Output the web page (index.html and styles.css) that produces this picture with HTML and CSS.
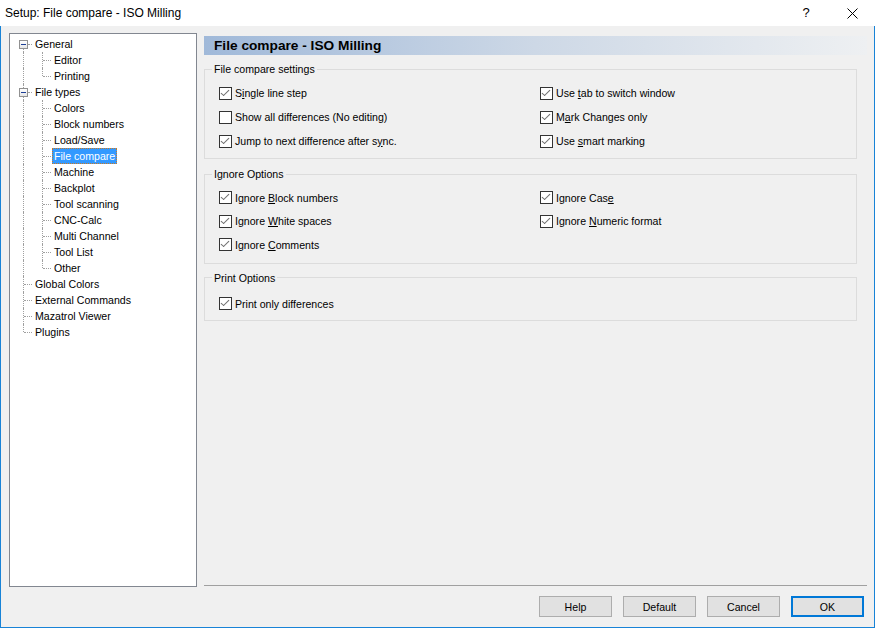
FILE: index.html
```html
<!DOCTYPE html>
<html>
<head>
<meta charset="utf-8">
<title>Setup: File compare - ISO Milling</title>
<link rel="stylesheet" href="styles.css">
</head>
<body>
<div class="window">
  <div class="titlebar">
    <span class="title">Setup: File compare - ISO Milling</span>
    <span class="tbtn help">?</span>
    <span class="tbtn close"><svg width="11" height="11" viewBox="0 0 11 11"><path d="M0.5 0.5 L10.5 10.5 M10.5 0.5 L0.5 10.5" stroke="#000" stroke-width="1" fill="none"/></svg></span>
  </div>
  <div class="body">
    <div class="tree">
      <div class="row"><span class="g exp first"><span class="box"><i></i></span></span><span class="lbl">General</span></div>
      <div class="row"><span class="g v"></span><span class="g tee"></span><span class="lbl">Editor</span></div>
      <div class="row"><span class="g v"></span><span class="g ell"></span><span class="lbl">Printing</span></div>
      <div class="row"><span class="g exp"><span class="box"><i></i></span></span><span class="lbl">File types</span></div>
      <div class="row"><span class="g v"></span><span class="g tee"></span><span class="lbl">Colors</span></div>
      <div class="row"><span class="g v"></span><span class="g tee"></span><span class="lbl">Block numbers</span></div>
      <div class="row"><span class="g v"></span><span class="g tee"></span><span class="lbl">Load/Save</span></div>
      <div class="row"><span class="g v"></span><span class="g tee"></span><span class="lbl sel">File compare</span></div>
      <div class="row"><span class="g v"></span><span class="g tee"></span><span class="lbl">Machine</span></div>
      <div class="row"><span class="g v"></span><span class="g tee"></span><span class="lbl">Backplot</span></div>
      <div class="row"><span class="g v"></span><span class="g tee"></span><span class="lbl">Tool scanning</span></div>
      <div class="row"><span class="g v"></span><span class="g tee"></span><span class="lbl">CNC-Calc</span></div>
      <div class="row"><span class="g v"></span><span class="g tee"></span><span class="lbl">Multi Channel</span></div>
      <div class="row"><span class="g v"></span><span class="g tee"></span><span class="lbl">Tool List</span></div>
      <div class="row"><span class="g v"></span><span class="g ell"></span><span class="lbl">Other</span></div>
      <div class="row"><span class="g tee"></span><span class="lbl">Global Colors</span></div>
      <div class="row"><span class="g tee"></span><span class="lbl">External Commands</span></div>
      <div class="row"><span class="g tee"></span><span class="lbl">Mazatrol Viewer</span></div>
      <div class="row"><span class="g ell"></span><span class="lbl">Plugins</span></div>
    </div>

    <div class="panel">
      <div class="header">File compare - ISO Milling</div>

      <fieldset class="group g1">
        <legend>File compare settings</legend>
        <div class="opts">
          <label class="opt"><span class="cb on"></span><span class="t">S<u>i</u>ngle line step</span></label>
          <label class="opt"><span class="cb on"></span><span class="t">Use <u>t</u>ab to switch window</span></label>
          <label class="opt"><span class="cb"></span><span class="t">Show all differences (No editing)</span></label>
          <label class="opt"><span class="cb on"></span><span class="t">M<u>a</u>rk Changes only</span></label>
          <label class="opt"><span class="cb on"></span><span class="t">Jump to next difference after s<u>y</u>nc.</span></label>
          <label class="opt"><span class="cb on"></span><span class="t">Use <u>s</u>mart marking</span></label>
        </div>
      </fieldset>

      <fieldset class="group g2">
        <legend>Ignore Options</legend>
        <div class="opts">
          <label class="opt"><span class="cb on"></span><span class="t">Ignore <u>B</u>lock numbers</span></label>
          <label class="opt"><span class="cb on"></span><span class="t">Ignore Cas<u>e</u></span></label>
          <label class="opt"><span class="cb on"></span><span class="t">Ignore <u>W</u>hite spaces</span></label>
          <label class="opt"><span class="cb on"></span><span class="t">Ignore <u>N</u>umeric format</span></label>
          <label class="opt"><span class="cb on"></span><span class="t">Ignore <u>C</u>omments</span></label>
        </div>
      </fieldset>

      <fieldset class="group g3">
        <legend>Print Options</legend>
        <div class="opts">
          <label class="opt"><span class="cb on"></span><span class="t">Print only differences</span></label>
        </div>
      </fieldset>

      <div class="sep"></div>
    </div>

    <div class="buttons">
      <button class="btn">Help</button>
      <button class="btn">Default</button>
      <button class="btn">Cancel</button>
      <button class="btn default">OK</button>
    </div>
  </div>
</div>
</body>
</html>
```

FILE: styles.css
```css
* { box-sizing: border-box; }

html, body {
  margin: 0;
  padding: 0;
  background: #f0f0f0;
}

body {
  font-family: "Liberation Sans", Arial, sans-serif;
  font-size: 10.6px;
  color: #000;
}

.window {
  width: 875px;
  height: 628px;
  display: flex;
  flex-direction: column;
  overflow: hidden;
}

/* Title bar */
.titlebar {
  height: 26px;
  flex: none;
  background: #fff;
  display: flex;
  align-items: center;
}

.title {
  flex: 1;
  padding-left: 5px;
  font-size: 12px;
  padding-bottom: 1px;
}

.tbtn {
  width: 46px;
  height: 26px;
  display: flex;
  align-items: center;
  justify-content: center;
  font-size: 13px;
}

.tbtn.help { padding-bottom: 1px; }

/* Body */
.body {
  flex: 1;
  background: #f0f0f0;
  border: 1px solid #1883d7;
  border-top: none;
  display: grid;
  grid-template-columns: 188px 1fr;
  grid-template-rows: 554px auto;
  column-gap: 7px;
  padding: 7px 7px 0 8px;
}

/* Tree */
.tree {
  background: #fff;
  border: 1px solid #828790;
  padding: 2px 0 0 4px;
}

.row {
  display: flex;
  height: 16px;
  align-items: stretch;
}

.g {
  position: relative;
  width: 19px;
  height: 16px;
  flex: none;
}

.v::before,
.tee::before,
.ell::before,
.exp::before {
  content: "";
  position: absolute;
  left: 9px;
  top: 0;
  bottom: 0;
  border-left: 1px dotted #a0a0a0;
}

.ell::before { bottom: 8px; }
.exp.first::before { top: 13px; }

.tee::after,
.ell::after,
.exp::after {
  content: "";
  position: absolute;
  left: 10px;
  right: 1px;
  top: 8px;
  border-top: 1px dotted #a0a0a0;
}

.exp::after { left: 14px; }

.box {
  position: absolute;
  left: 5px;
  top: 4px;
  width: 9px;
  height: 9px;
  border: 1px solid #919191;
  background: linear-gradient(#ffffff, #e6e6e6);
  display: flex;
  align-items: center;
  justify-content: center;
  z-index: 1;
}

.box i {
  display: block;
  width: 5px;
  height: 1px;
  background: #1d3f96;
}

.lbl {
  height: 16px;
  line-height: 14px;
  border: 1px dotted transparent;
  padding: 0 1px;
  white-space: nowrap;
}

.lbl.sel {
  background: #3399ff;
  color: #fff;
  border-color: #cc7a22;
}

/* Right panel */
.panel {
  display: flex;
  flex-direction: column;
  min-width: 0;
}

.header {
  margin-top: 3px;
  height: 19px;
  line-height: 19px;
  padding-left: 10px;
  font-size: 13.7px;
  font-weight: bold;
  background: linear-gradient(to right, #a0b9d9, #cdd8e6 50%, #eef0f2);
}

.group {
  margin: 0;
  padding: 0;
  width: 653px;
  min-width: 0;
  border: 1px solid #dcdcdc;
}

.group legend {
  margin-left: 7px;
  padding: 0 2px;
  line-height: 14px;
}

.g1 { margin-top: 7px; }
.g2 { margin-top: 8px; }
.g3 { margin-top: 7px; }

.opts {
  display: grid;
  grid-template-columns: 321px 1fr;
  padding: 5px 0 5px 14px;
}

.g1 .opt { height: 24px; }
.g2 .opt { height: 23.5px; }
.g2 .opts { padding-bottom: 6px; }
.g3 .opts { padding-top: 7px; padding-bottom: 4px; }

.opt {
  display: flex;
  align-items: center;
  gap: 3px;
  height: 24px;
  white-space: nowrap;
}

.opt u { text-decoration-thickness: 1px; text-underline-offset: 1px; }

.cb {
  width: 13px;
  height: 13px;
  flex: none;
  border: 1px solid #333;
  background: #fff;
  position: relative;
}

.cb.on::after {
  content: "";
  position: absolute;
  left: 3px;
  top: 0px;
  width: 3px;
  height: 7px;
  border-right: 1px solid #707070;
  border-bottom: 1px solid #707070;
  transform: rotate(40deg) skewX(-6deg);
  transform-origin: center;
}

.sep {
  margin-top: auto;
  margin-bottom: 1px;
  height: 1px;
  background: #a0a0a0;
}

/* Buttons */
.buttons {
  grid-column: 1 / 3;
  display: flex;
  justify-content: flex-end;
  gap: 11px;
  padding-top: 9px;
  padding-right: 3px;
}

.btn {
  width: 73px;
  height: 21px;
  padding: 0;
  font-family: "Liberation Sans", Arial, sans-serif;
  font-size: 10.6px;
  color: #000;
  background: #e1e1e1;
  border: 1px solid #adadad;
  border-radius: 0;
}

.btn.default {
  border: 2px solid #0078d7;
}
```
